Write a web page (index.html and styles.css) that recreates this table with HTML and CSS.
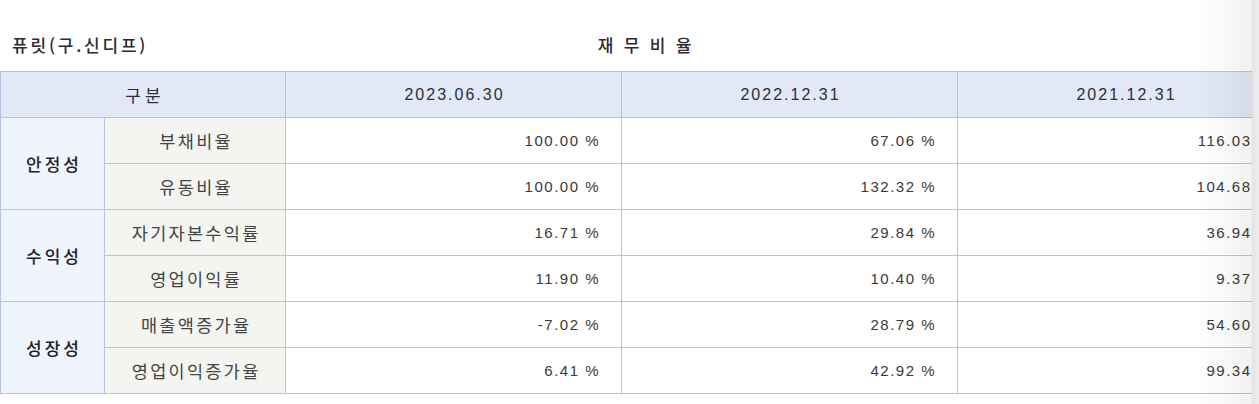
FILE: index.html
```html
<!DOCTYPE html>
<html lang="ko">
<head>
<meta charset="utf-8">
<title>재무비율</title>
<link rel="stylesheet" href="styles.css">
</head>
<body>
<div class="frame">
  <div class="sheet">
    <div class="caption">
      <div class="company">퓨릿(구.신디프)</div>
      <div class="title">재 무 비 율</div>
      <div class="spacer"></div>
    </div>
    <table class="ratios">
      <colgroup>
        <col class="c-group"><col class="c-item"><col class="c-val"><col class="c-val"><col class="c-val">
      </colgroup>
      <thead>
        <tr>
          <th colspan="2" class="kr">구분</th>
          <th class="date">2023.06.30</th>
          <th class="date">2022.12.31</th>
          <th class="date">2021.12.31</th>
        </tr>
      </thead>
      <tbody>
        <tr>
          <td rowspan="2" class="group">안정성</td>
          <td class="item">부채비율</td>
          <td class="num">100.00 %</td><td class="num">67.06 %</td><td class="num">116.03 %</td>
        </tr>
        <tr>
          <td class="item">유동비율</td>
          <td class="num">100.00 %</td><td class="num">132.32 %</td><td class="num">104.68 %</td>
        </tr>
        <tr>
          <td rowspan="2" class="group">수익성</td>
          <td class="item">자기자본수익률</td>
          <td class="num">16.71 %</td><td class="num">29.84 %</td><td class="num">36.94 %</td>
        </tr>
        <tr>
          <td class="item">영업이익률</td>
          <td class="num">11.90 %</td><td class="num">10.40 %</td><td class="num">9.37 %</td>
        </tr>
        <tr>
          <td rowspan="2" class="group">성장성</td>
          <td class="item">매출액증가율</td>
          <td class="num">-7.02 %</td><td class="num">28.79 %</td><td class="num">54.60 %</td>
        </tr>
        <tr>
          <td class="item">영업이익증가율</td>
          <td class="num">6.41 %</td><td class="num">42.92 %</td><td class="num">99.34 %</td>
        </tr>
      </tbody>
    </table>
  </div>
  <div class="edge"></div>
</div>
</body>
</html>
```

FILE: styles.css
```css
html, body {
  margin: 0;
  padding: 0;
  overflow: hidden;
  background: #ffffff;
}

body {
  font-family: "Noto Sans CJK KR", "Liberation Sans", sans-serif;
  color: #333333;
}

.frame {
  position: relative;
  width: 1259px;
  height: 404px;
  overflow: hidden;
}

.sheet {
  width: 1292px;
}

.caption {
  display: grid;
  grid-template-columns: 1fr auto 1fr;
  align-items: center;
  height: 30px;
  padding-top: 30px;
  padding-bottom: 11px;
  line-height: 30px;
}

.company {
  padding-left: 12px;
  font-size: 17px;
  font-weight: 500;
  letter-spacing: 2.8px;
  color: #2a2a33;
}

.title {
  font-size: 17px;
  font-weight: 500;
  letter-spacing: 2.8px;
  color: #2a2a33;
}

.ratios {
  width: 1292px;
  border-collapse: collapse;
  table-layout: fixed;
}

.c-group { width: 104px; }
.c-item { width: 181px; }
.c-val { width: 336px; }

.ratios th,
.ratios td {
  border: 1px solid #b4c4e4;
  height: 46px;
  padding: 0;
  box-sizing: border-box;
}

.ratios th {
  background: #e2e8f5;
  font-weight: 400;
  color: #2e2e3a;
  text-align: center;
}

.ratios th.kr {
  font-size: 17px;
  letter-spacing: 4px;
  text-indent: 4px;
}

.ratios th.date {
  font-family: "Liberation Sans", sans-serif;
  font-size: 16px;
  letter-spacing: 2px;
  text-indent: 2px;
}

.group {
  background: #f0f4fd;
  text-align: center;
  font-size: 17px;
  font-weight: 500;
  letter-spacing: 3px;
  text-indent: 3px;
  color: #22222e;
}

.item {
  background: #f4f5f1;
  text-align: center;
  font-size: 17.5px;
  letter-spacing: 2.3px;
  text-indent: 2.3px;
  color: #444444;
}

.num {
  text-align: right;
  padding-right: 21px !important;
  font-family: "Liberation Sans", sans-serif;
  font-size: 15px;
  letter-spacing: 1.5px;
  color: #3a3a3a;
}

.edge {
  position: absolute;
  top: 0;
  right: 0;
  width: 60px;
  height: 404px;
  background:
    linear-gradient(to right, #e3e3e3, #eeeeee) right top / 7px 100% no-repeat,
    linear-gradient(to right, rgba(0, 0, 0, 0), rgba(0, 0, 0, 0.06)) left top / 53px 100% no-repeat;
}
```
